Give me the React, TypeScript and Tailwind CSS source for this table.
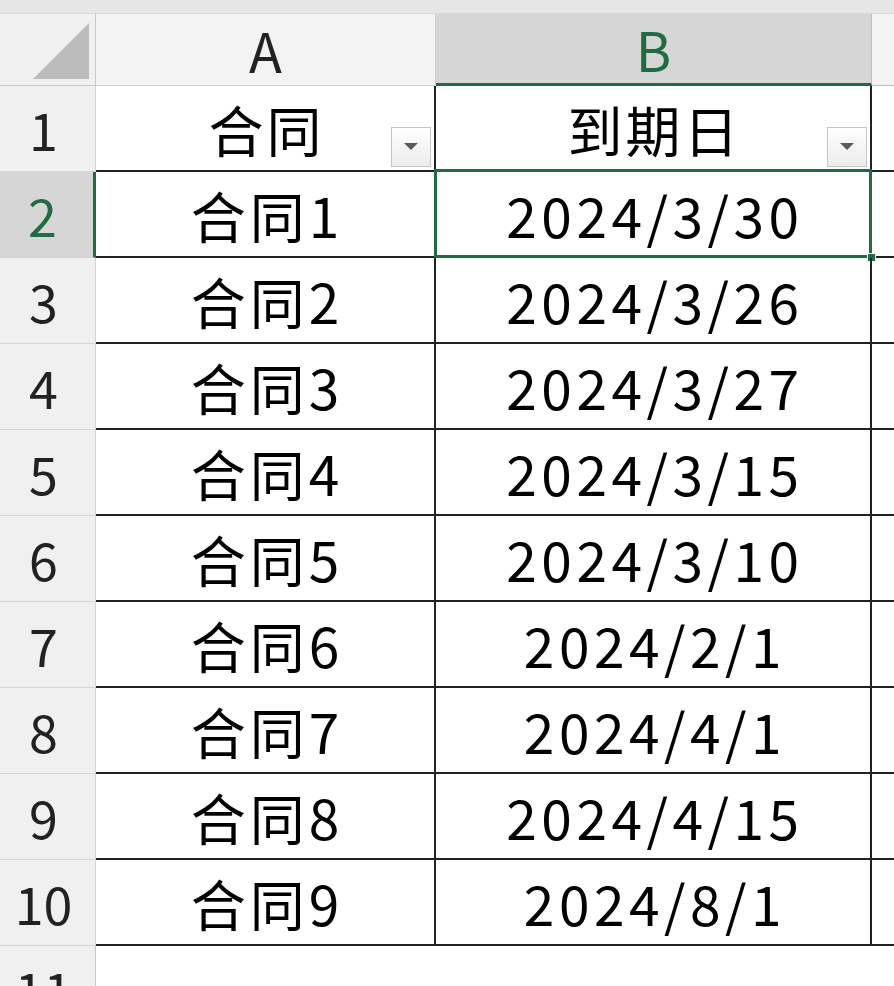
import React from "react";

const rows: [string, string][] = [
  ["合同1", "2024/3/30"],
  ["合同2", "2024/3/26"],
  ["合同3", "2024/3/27"],
  ["合同4", "2024/3/15"],
  ["合同5", "2024/3/10"],
  ["合同6", "2024/2/1"],
  ["合同7", "2024/4/1"],
  ["合同8", "2024/4/15"],
  ["合同9", "2024/8/1"],
];

const font = { fontFamily: '"Noto Sans CJK SC", "Noto Sans", sans-serif' };

function FilterBtn() {
  return (
    <div className="absolute right-[3px] bottom-[3px] w-[40px] h-[40px] border border-[#c6c6c6] bg-gradient-to-b from-[#ffffff] to-[#ececec] flex items-center justify-center">
      <svg width="14" height="8" viewBox="0 0 14 8">
        <polygon points="0,0 14,0 7,7" fill="#5a5a5a" />
      </svg>
    </div>
  );
}

export default function App() {
  return (
    <div className="w-[894px] h-[986px] overflow-hidden bg-white text-black" style={font}>
      {/* top band */}
      <div className="h-[14px] bg-[#e6e6e6] border-b border-[#d8d8d8]" />
      {/* column header row */}
      <div className="flex h-[72px]">
        <div className="w-[96px] shrink-0 bg-[#f0f0f0] border-r border-[#c8c8c8] border-b border-[#bdbdbd] relative">
          <svg className="absolute left-0 top-0" width="96" height="72" viewBox="0 0 96 72">
            <polygon points="33,65 89,65 89,9" fill="#bcbcbc" />
          </svg>
        </div>
        <div className="w-[340px] shrink-0 bg-[#f3f3f3] border-r border-[#d0d0d0] border-b border-[#bdbdbd] flex items-center justify-center text-[54px] text-[#222] leading-none">
          A
        </div>
        <div className="w-[436px] shrink-0 bg-[#d6d6d6] border-r border-[#bdbdbd] border-b-[3px] border-b-[#1e6b44] flex items-center justify-center text-[54px] text-[#1e6b44] leading-none">
          B
        </div>
        <div className="flex-1 bg-[#f3f3f3] border-b border-[#bdbdbd]" />
      </div>
      {/* header row 1 */}
      <div className="flex h-[86px]">
        <div className="w-[96px] shrink-0 bg-[#f0f0f0] border-r border-[#c8c8c8] border-b border-[#d4d4d4] flex items-center justify-center pr-[8px] text-[52px] text-[#222] leading-none">
          1
        </div>
        <div className="w-[340px] shrink-0 relative border-r-2 border-[#222] border-b-2 flex items-center justify-center text-[55px] leading-none pl-[3px] tracking-[3px]">
          合同
          <FilterBtn />
        </div>
        <div className="w-[436px] shrink-0 relative border-r-2 border-[#222] border-b-2 flex items-center justify-center text-[55px] leading-none pl-[3px] tracking-[3px]">
          到期日
          <FilterBtn />
        </div>
        <div className="flex-1 border-b-2 border-[#222]" />
      </div>
      {rows.map(([a, b], i) => {
        const sel = i === 0;
        return (
          <div key={i} className="flex h-[86px]">
            <div
              className={
                sel
                  ? "w-[96px] shrink-0 bg-[#d6d6d6] border-r-[3px] border-r-[#1e6b44] border-b border-[#d4d4d4] flex items-center justify-center pr-[8px] text-[52px] text-[#1e6b44] leading-none"
                  : "w-[96px] shrink-0 bg-[#f0f0f0] border-r border-[#c8c8c8] border-b border-[#d4d4d4] flex items-center justify-center pr-[8px] text-[52px] text-[#222] leading-none"
              }
            >
              {i + 2}
            </div>
            <div className="w-[340px] shrink-0 border-r-2 border-[#222] border-b-2 flex items-center justify-center text-[55px] leading-none pl-[4px] tracking-[4px]">
              {a}
            </div>
            <div className="w-[436px] shrink-0 relative border-r-2 border-[#222] border-b-2 flex items-center justify-center text-[55px] leading-none pl-[4px] tracking-[4.5px]">
              {b}
              {sel && (
                <>
                  <div className="absolute left-[-2px] top-[-3px] right-[-2px] bottom-[-2px] border-[3px] border-[#1e6b44]" />
                  <div className="absolute right-[-6px] bottom-[-6px] w-[9px] h-[9px] bg-[#1e6b44] border border-white" />
                </>
              )}
            </div>
            <div className="flex-1 border-b-2 border-[#222]" />
          </div>
        );
      })}
      {/* row 11 */}
      <div className="flex h-[86px]">
        <div className="w-[96px] shrink-0 bg-[#f0f0f0] border-r border-[#c8c8c8] flex items-center justify-center pr-[8px] text-[52px] text-[#222] leading-none">
          11
        </div>
        <div className="flex-1" />
      </div>
    </div>
  );
}
